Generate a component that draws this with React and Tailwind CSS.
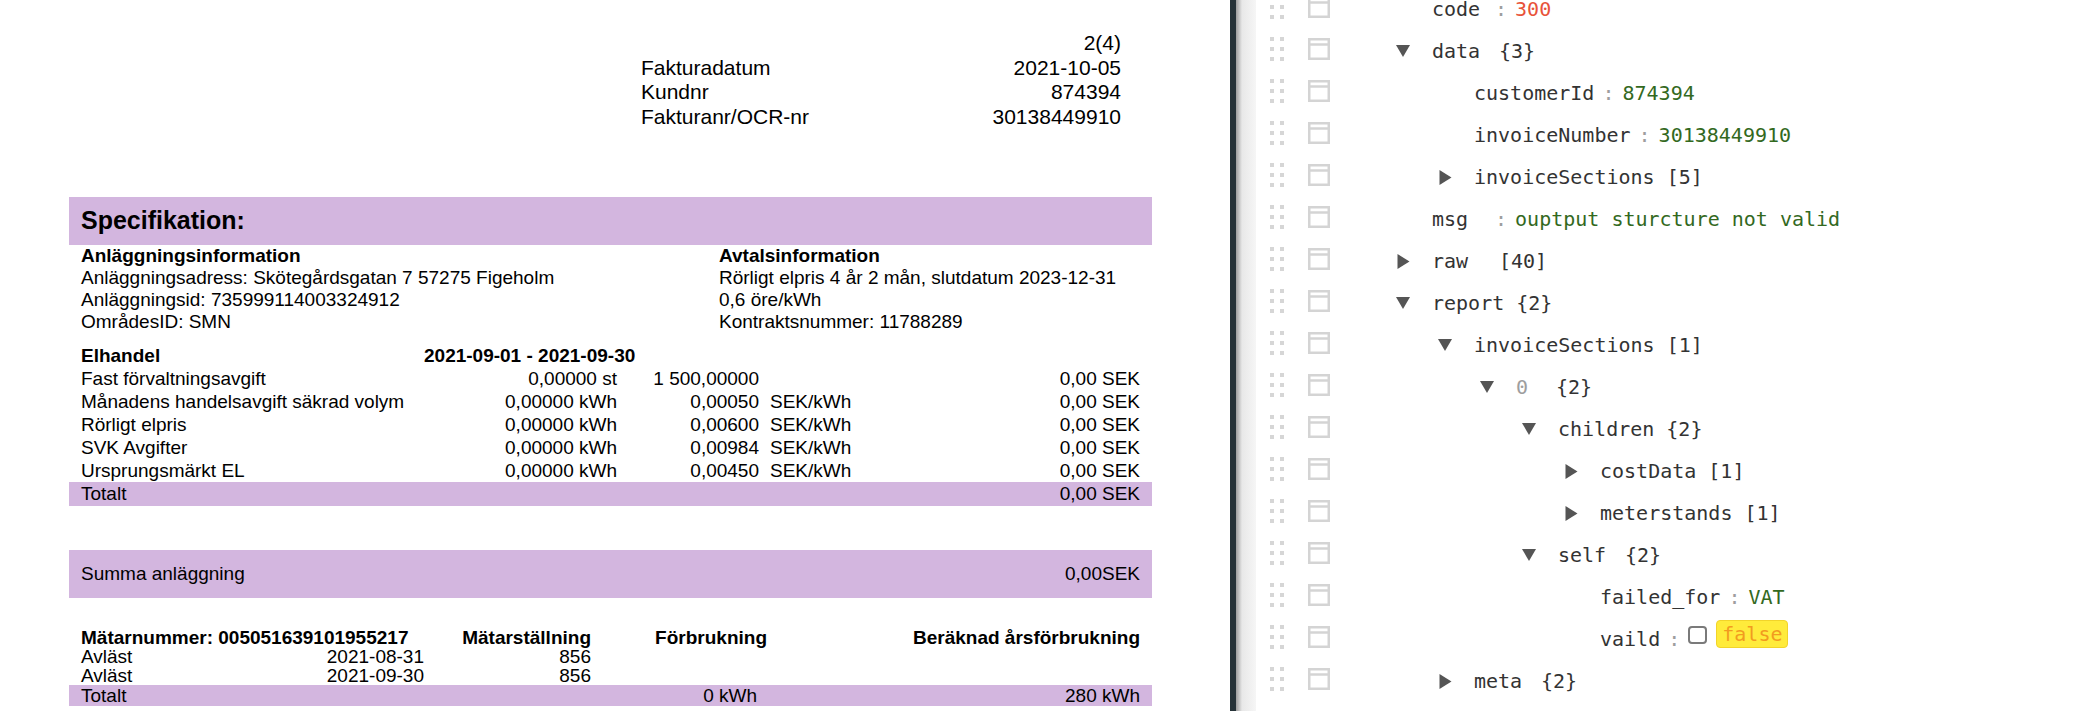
import React from "react";

const purple = "bg-[#d3b6df]";

const levelPad = ["pl-[66px]", "pl-[108px]", "pl-[150px]", "pl-[192px]", "pl-[234px]"];

const treeRows = [
  { level: 0, key: "code", value: "300", tone: "red" },
  { level: 0, arrow: "down", key: "data", count: "{3}" },
  { level: 1, key: "customerId", value: "874394" },
  { level: 1, key: "invoiceNumber", value: "30138449910" },
  { level: 1, arrow: "right", key: "invoiceSections", count: "[5]" },
  { level: 0, key: "msg", value: "ouptput sturcture not valid" },
  { level: 0, arrow: "right", key: "raw", count: "[40]" },
  { level: 0, arrow: "down", key: "report", count: "{2}" },
  { level: 1, arrow: "down", key: "invoiceSections", count: "[1]" },
  { level: 2, arrow: "down", key: "0", index: true, count: "{2}" },
  { level: 3, arrow: "down", key: "children", count: "{2}" },
  { level: 4, arrow: "right", key: "costData", count: "[1]" },
  { level: 4, arrow: "right", key: "meterstands", count: "[1]" },
  { level: 3, arrow: "down", key: "self", count: "{2}" },
  { level: 4, key: "failed_for", value: "VAT" },
  { level: 4, key: "vaild", bool: false },
  { level: 1, arrow: "right", key: "meta", count: "{2}" }
];

const costRows = [
  ["Fast förvaltningsavgift", "0,00000 st", "1 500,00000", "", "0,00 SEK"],
  ["Månadens handelsavgift säkrad volym", "0,00000 kWh", "0,00050", "SEK/kWh", "0,00 SEK"],
  ["Rörligt elpris", "0,00000 kWh", "0,00600", "SEK/kWh", "0,00 SEK"],
  ["SVK Avgifter", "0,00000 kWh", "0,00984", "SEK/kWh", "0,00 SEK"],
  ["Ursprungsmärkt EL", "0,00000 kWh", "0,00450", "SEK/kWh", "0,00 SEK"]
];

function DragHandle() {
  return (
    <svg width="14" height="24" viewBox="0 0 14 24" className="mb-[4px] shrink-0">
      {[0, 10, 20].map((y) =>
        [0, 10].map((x) => <rect key={`${x}-${y}`} x={x} y={y} width="4" height="4" fill="#d6d6d6" />)
      )}
    </svg>
  );
}

function RowIcon() {
  return (
    <svg width="22" height="22" viewBox="0 0 22 22" className="mb-[4px] ml-[24px] shrink-0">
      <rect x="1.25" y="1.25" width="19.5" height="19.5" fill="none" stroke="#d4d4d4" strokeWidth="2.5" />
      <line x1="1.25" y1="6.5" x2="20.75" y2="6.5" stroke="#d4d4d4" strokeWidth="2.5" />
    </svg>
  );
}

function Arrow({ dir }) {
  if (dir === "down") {
    return (
      <svg width="14" height="12" viewBox="0 0 14 12">
        <path d="M0 0 L14 0 L7 12 Z" fill="#555" />
      </svg>
    );
  }
  if (dir === "right") {
    return (
      <svg width="14" height="15" viewBox="0 0 14 15">
        <path d="M1.5 0 L13.5 7.5 L1.5 15 Z" fill="#555" />
      </svg>
    );
  }
  return null;
}

function TreeRow({ row }) {
  const valueColor = row.tone === "red" ? "text-[#e8533a]" : "text-[#33691e]";

  return (
    <div className="flex h-[42px] items-center pl-[14px]">
      <DragHandle />
      <RowIcon />
      <div className={`flex items-center ${levelPad[row.level]}`}>
        <div className="flex w-[36px] shrink-0 items-center">
          <Arrow dir={row.arrow} />
        </div>
        <span
          className={
            row.index
              ? "inline-block min-w-[40px] text-[#9e9e9e]"
              : "inline-block min-w-[55px] whitespace-pre text-[#333]"
          }
        >
          {row.key}
        </span>
        {row.count ? <span className={row.index ? "text-[#333]" : "ml-3 text-[#333]"}>{row.count}</span> : null}
        {row.value !== undefined || row.bool !== undefined ? (
          <span className="mx-2 text-[#9e9e9e]">:</span>
        ) : null}
        {row.value !== undefined ? <span className={`whitespace-pre ${valueColor}`}>{row.value}</span> : null}
        {row.bool !== undefined ? (
          <>
            <span className="mb-[9px] h-[18px] w-[19px] rounded-[4px] border-2 border-[#7a7a7a] bg-white" />
            <span className="mb-[11px] ml-[9px] flex h-[28px] items-center rounded-[4px] border border-[#f2d42a] bg-[#ffeb3b] px-[5px] text-[#f29b1f]">
              false
            </span>
          </>
        ) : null}
      </div>
    </div>
  );
}

function Invoice() {
  return (
    <div className="w-[1230px] shrink-0 bg-white font-['Liberation_Sans',Arial,sans-serif] text-black">
      <div className="w-[1152px] pl-[69px]">
        <div className="ml-[572px] w-[480px] pt-[31px] text-[21px] leading-[24.5px]">
          <div className="text-right">2(4)</div>
          <div className="flex justify-between">
            <span>Fakturadatum</span>
            <span>2021-10-05</span>
          </div>
          <div className="flex justify-between">
            <span>Kundnr</span>
            <span>874394</span>
          </div>
          <div className="flex justify-between">
            <span>Fakturanr/OCR-nr</span>
            <span>30138449910</span>
          </div>
        </div>

        <div className={`mt-[68px] flex h-[48px] items-center px-[12px] text-[25px] font-bold ${purple}`}>
          Specifikation:
        </div>

        <div className="grid grid-cols-[638px_1fr] px-[12px] text-[19px] leading-[22px]">
          <div>
            <div className="font-bold">Anläggningsinformation</div>
            <div>Anläggningsadress: Skötegårdsgatan 7 57275 Figeholm</div>
            <div>Anläggningsid: 735999114003324912</div>
            <div>OmrådesID: SMN</div>
          </div>
          <div>
            <div className="font-bold">Avtalsinformation</div>
            <div>Rörligt elpris 4 år 2 mån, slutdatum 2023-12-31</div>
            <div>0,6 öre/kWh</div>
            <div>Kontraktsnummer: 11788289</div>
          </div>
        </div>

        <div className="mt-[11px] text-[19px] leading-[23px]">
          <div className="grid grid-cols-[343px_1fr] px-[12px] font-bold">
            <span>Elhandel</span>
            <span>2021-09-01 - 2021-09-30</span>
          </div>
          {costRows.map((r) => (
            <div key={r[0]} className="grid grid-cols-[343px_193px_142px_1fr_auto] px-[12px]">
              <span className="whitespace-nowrap">{r[0]}</span>
              <span className="text-right">{r[1]}</span>
              <span className="text-right">{r[2]}</span>
              <span className="pl-[11px]">{r[3]}</span>
              <span className="text-right">{r[4]}</span>
            </div>
          ))}
          <div className={`flex h-[24px] items-center justify-between px-[12px] leading-[24px] ${purple}`}>
            <span>Totalt</span>
            <span>0,00 SEK</span>
          </div>
        </div>

        <div className={`mt-[44px] flex h-[48px] items-center justify-between px-[12px] text-[19px] ${purple}`}>
          <span>Summa anläggning</span>
          <span>0,00SEK</span>
        </div>

        <div className="mt-[30px] text-[19px] leading-[19px]">
          <div className="grid grid-cols-[343px_167px_176px_1fr] px-[12px] font-bold">
            <span className="whitespace-nowrap">Mätarnummer: 005051639101955217</span>
            <span className="text-right">Mätarställning</span>
            <span className="text-right">Förbrukning</span>
            <span className="text-right">Beräknad årsförbrukning</span>
          </div>
          {["2021-08-31", "2021-09-30"].map((d) => (
            <div key={d} className="grid grid-cols-[343px_167px_176px_1fr] px-[12px]">
              <span className="flex justify-between">
                <span>Avläst</span>
                <span>{d}</span>
              </span>
              <span className="text-right">856</span>
              <span />
              <span />
            </div>
          ))}
          <div className={`grid h-[21px] grid-cols-[343px_167px_176px_1fr] items-center px-[12px] leading-[21px] ${purple}`}>
            <span>Totalt</span>
            <span />
            <span className="pr-[10px] text-right">0 kWh</span>
            <span className="text-right">280 kWh</span>
          </div>
        </div>
      </div>
    </div>
  );
}

export default function App() {
  return (
    <div className="flex h-[711px] w-[2100px] overflow-hidden bg-white">
      <Invoice />
      <div className="w-[6px] shrink-0 bg-[#263238]" />
      <div className="flex min-w-0 flex-1">
        <div className="w-[20px] shrink-0 bg-linear-to-r from-[#9e9e9e] via-[#e8e8e8] via-30% to-[#f6f6f6]" />
        <div className="-mt-[12px] flex-1 font-['DejaVu_Sans_Mono',monospace] text-[20px]">
          {treeRows.map((row, i) => (
            <TreeRow key={i} row={row} />
          ))}
        </div>
      </div>
    </div>
  );
}
